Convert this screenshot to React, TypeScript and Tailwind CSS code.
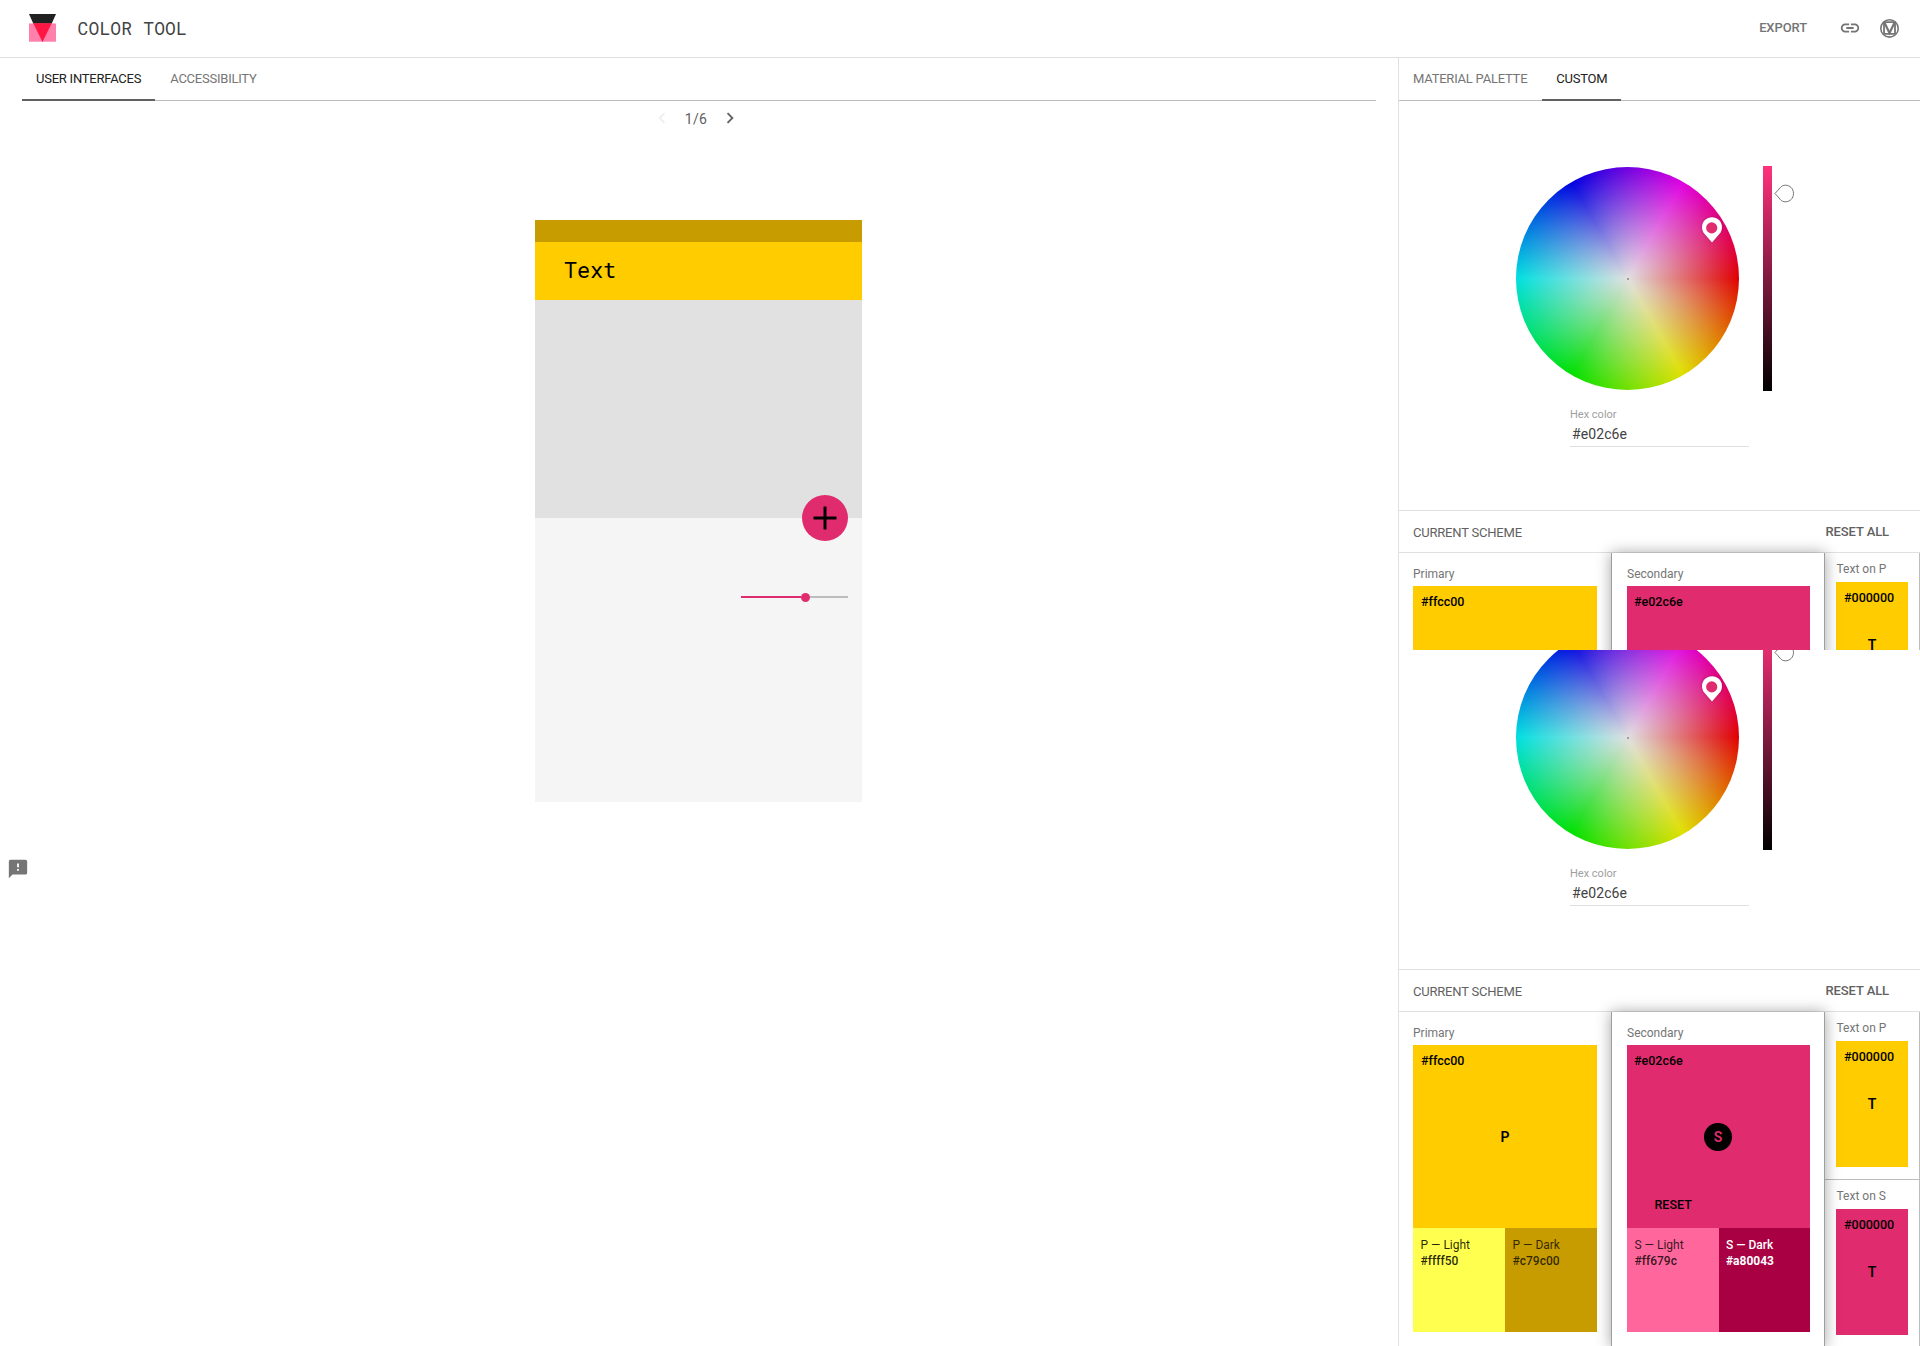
import React from "react";

function Logo() {
  return (
    <svg className="-mt-px" width="27" height="28" viewBox="0 0 27 28">
      <path d="M0 0H27L22.5 10H4.5Z" fill="#212121" />
      <path d="M0 9.5H27V27.7H0Z" fill="#ff80ab" />
      <path d="M4.3 9.3H22.7L13.5 28Z" fill="#ff1744" />
    </svg>
  );
}

function Header() {
  return (
    <header className="flex h-[58px] shrink-0 items-center border-b border-[#e0e0e0] pl-[29px] pr-[20px]">
      <Logo />
      <h1 className="ml-[21.500px] pb-[2px] font-['Roboto_Mono','Liberation_Mono',monospace] text-[18px] leading-6 tracking-[0.15px] text-[#424242]">
        COLOR TOOL
      </h1>
      <nav className="ml-auto flex items-center pb-[2px] text-[#757575]">
        <span className="text-[13px] font-medium leading-5 tracking-[-0.1px]">EXPORT</span>
        <svg className="ml-[32px]" width="22" height="22" viewBox="0 0 24 24" fill="currentColor">
          <path d="M3.9 12c0-1.71 1.39-3.1 3.1-3.1h4V7H7c-2.76 0-5 2.24-5 5s2.24 5 5 5h4v-1.9H7c-1.71 0-3.1-1.39-3.1-3.1zM8 13h8v-2H8v2zm9-6h-4v1.9h4c1.71 0 3.1 1.39 3.1 3.1s-1.39 3.1-3.1 3.1h-4V17h4c2.76 0 5-2.24 5-5s-2.24-5-5-5z" />
        </svg>
        <svg className="ml-[19px]" width="20" height="20" viewBox="0 0 20 20" fill="none" stroke="currentColor">
          <circle cx="9.5" cy="10.4" r="8.7" strokeWidth="1.6" />
          <path d="M4 4.2H15V15.8H4Z" strokeWidth="1.8" />
          <path d="M4.4 4.6L9.5 15L14.6 4.6" strokeWidth="2.2" />
        </svg>
      </nav>
    </header>
  );
}

function Tab({ label, active }: { label: string; active?: boolean }) {
  return (
    <div
      className={
        active
          ? "h-[43px] border-b-2 border-[#616161] px-[14px] pt-[11px] text-[#212121] not-first:ml-px"
          : "h-[43px] px-[14px] pt-[11px] text-[#757575] not-first:ml-px"
      }
    >
      <span className="block whitespace-nowrap text-[13px] leading-5 tracking-[-0.23px]">{label}</span>
    </div>
  );
}

function Phone() {
  return (
    <div className="ml-[535px] flex h-[582px] w-[327px] flex-col bg-[#f5f5f5]">
      <div className="h-[22px] bg-[#c79c00]" />
      <div className="flex h-[58px] items-center bg-[#ffcc00] pb-[2px] pl-[29px] font-['Roboto_Mono','Liberation_Mono',monospace] text-[22px] leading-7 tracking-[-0.2px] text-black">
        Text
      </div>
      <div className="h-[218px] bg-[#e1e1e1]" />
      <div className="-mt-[23px] mr-[14px] flex size-[46px] items-center justify-center self-end rounded-full bg-[#e02c6e]">
        <svg width="24" height="24" viewBox="0 0 24 24" stroke="#000" strokeWidth="3">
          <path d="M12 .5V23.5M.5 12H23.5" />
        </svg>
      </div>
      <div className="mr-[14px] mt-[51px] flex h-[10px] w-[107px] items-center self-end">
        <div className="h-[2px] w-[60px] bg-[#e02c6e]" />
        <div className="size-[9px] shrink-0 rounded-full bg-[#e02c6e]" />
        <div className="h-[2px] grow bg-[#bdbdbd]" />
      </div>
    </div>
  );
}

function Preview() {
  return (
    <main className="flex w-[1398px] shrink-0 flex-col">
      <div className="mx-[22px] flex h-[43px] border-b border-[#bdbdbd]">
        <Tab label="USER INTERFACES" active />
        <Tab label="ACCESSIBILITY" />
      </div>
      <div className="flex h-[35px] items-center justify-center pb-[2px] pr-[6px] text-[#616161]">
        <svg className="text-[#eeeeee]" width="22" height="22" viewBox="0 0 24 24" fill="currentColor">
          <path d="M15.41 7.41L14 6l-6 6 6 6 1.41-1.41L10.83 12z" />
        </svg>
        <span className="mx-[12px] pt-[2px] text-[14px] leading-5 tracking-[0.4px]">1/6</span>
        <svg width="22" height="22" viewBox="0 0 24 24" fill="currentColor">
          <path d="M10 6L8.59 7.41 13.17 12l-4.58 4.59L10 18l6-6z" />
        </svg>
      </div>
      <div className="pt-[84px]">
        <Phone />
      </div>
      <svg className="ml-[7px] mt-[56px]" width="22" height="22" viewBox="0 0 24 24" fill="#757575">
        <path d="M20 2H4c-1.1 0-1.99.9-1.99 2L2 22l4-4h14c1.1 0 2-.9 2-2V4c0-1.1-.9-2-2-2zm-7 12h-2v-2h2v2zm0-4h-2V6h2v4z" />
      </svg>
    </main>
  );
}

function Picker() {
  return (
    <section className="h-[409px] pt-[65px]">
      <div className="ml-[117px] flex">
        <div className="relative mt-px size-[223px] rounded-full bg-[radial-gradient(circle_closest-side,#e0e0e0,rgba(224,224,224,0)),conic-gradient(from_90deg,#e00000,#e0e000,#00e000,#00e0e0,#0000e0,#e000e0,#e00000)]">
          <div className="absolute left-[111px] top-[111px] size-[2px] bg-[#9e9e9e]" />
          <svg
            className="absolute left-[182px] top-[47px] overflow-visible drop-shadow-[0_0_1px_rgba(0,0,0,0.3)]"
            width="28"
            height="32"
            viewBox="0 0 28 32"
          >
            <path
              d="M14 28.5L6.4 19.8C4.9 18 4 15.8 4 13.2C4 7.5 8.4 3.3 14 3.3S24 7.5 24 13.2C24 15.8 23.1 18 21.6 19.8Z"
              fill="#fff"
            />
            <circle cx="13.7" cy="13.9" r="5.6" fill="#e02c6e" />
          </svg>
        </div>
        <div className="ml-[24px] h-[225px] w-[9px] bg-[linear-gradient(#ff327d,#000)]" />
        <svg className="ml-[2px] mt-[18px]" width="21" height="19" viewBox="0 0 21 19" fill="#fff" stroke="#757575">
          <path d="M.9 9.5C2.8 7.8 4.2 5.9 6 3.8C7.5 2 9.3 1.2 11.5 1.2C16 1.2 19.5 4.8 19.5 9.5S16 17.8 11.5 17.8C9.3 17.8 7.5 17 6 15.2C4.2 13.1 2.8 11.2 .9 9.5Z" />
        </svg>
      </div>
      <div className="ml-[171px] mt-[16px] flex h-[40px] w-[179px] flex-col border-b border-[#e0e0e0]">
        <label className="text-[11px] leading-4 text-[#9e9e9e]">Hex color</label>
        <span className="mt-px pl-[2px] text-[14px] leading-5 tracking-[0.1px] text-[#424242]">#e02c6e</span>
      </div>
    </section>
  );
}

function Shade({ name, hex, className }: { name: string; hex: string; className: string }) {
  return (
    <div className={`flex-1 pl-[7.500px] pt-[9px] text-[12px] leading-4 ${className}`}>
      <div>{name}</div>
      <div className="font-medium in-[.font-medium]:font-bold">{hex}</div>
    </div>
  );
}

function TextSwatch({ label, className }: { label: string; className: string }) {
  return (
    <div className="h-[168px] border-b border-[#bdbdbd] pl-[11px]">
      <div className="h-[29px] pl-[0.500px] pt-[8px] text-[12px] leading-4 text-[#757575]">{label}</div>
      <div className={`h-[126px] w-[72px] text-black ${className}`}>
        <div className="pl-[8px] pt-[8px] text-[12.500px] font-medium leading-4">#000000</div>
        <div className="pt-[29px] text-center text-[14px] font-semibold leading-5">T</div>
      </div>
    </div>
  );
}

function Scheme({ peek }: { peek?: boolean }) {
  return (
    <section>
      <div className="flex h-[43px] items-center justify-between border-b border-t border-[#e0e0e0] pl-[14px] pr-[31px]">
        <span className="pt-[3px] text-[13px] leading-5 tracking-[-0.2px] text-[#616161]">CURRENT SCHEME</span>
        <span className="text-[13px] font-medium leading-5 tracking-[-0.1px] text-[#616161]">RESET ALL</span>
      </div>
      <div className="flex h-[336px]">
        <div className="w-[212px] pl-[14px]">
          <div className="h-[33px] pt-[13px] text-[12px] leading-4 text-[#757575]">Primary</div>
          <div className="w-[184px]">
            <div className="h-[183px] bg-[#ffcc00] pl-[8px] pt-[8px] text-[12.500px] font-medium leading-4 text-black">
              #ffcc00
              {!peek && <div className="-ml-[8px] mt-[58px] text-center text-[14px] font-semibold leading-5">P</div>}
            </div>
            {!peek && (
              <div className="flex h-[104px]">
                <Shade name="P — Light" hex="#ffff50" className="bg-[#ffff50] text-black/85" />
                <Shade name="P — Dark" hex="#c79c00" className="bg-[#c79c00] text-black/75" />
              </div>
            )}
          </div>
        </div>
        <div className="z-10 w-[214px] border-x border-[#9e9e9e] bg-white pl-[15px] shadow-[0_0_14px_rgba(0,0,0,0.36)]">
          <div className="h-[33px] pt-[13px] text-[12px] leading-4 text-[#757575]">Secondary</div>
          <div className="w-[183px]">
            <div className="flex h-[183px] flex-col bg-[#e02c6e] text-black">
              <div className="pl-[7px] pt-[8px] text-[12.500px] font-medium leading-4">#e02c6e</div>
              {!peek && (
                <>
                  <div className="mr-px mt-[54px] flex size-[28px] items-center justify-center self-center rounded-full bg-black text-[14px] font-semibold text-[#e02c6e]">
                    S
                  </div>
                  <div className="ml-[27.500px] mt-[44px] text-[12.500px] font-medium leading-5">RESET</div>
                </>
              )}
            </div>
            {!peek && (
              <div className="flex h-[104px]">
                <Shade name="S — Light" hex="#ff679c" className="bg-[#ff679c] text-black/80" />
                <Shade name="S — Dark" hex="#a80043" className="bg-[#a80043] font-medium text-white" />
              </div>
            )}
          </div>
        </div>
        <div className="w-[95px] border-r border-[#bdbdbd]">
          <TextSwatch label="Text on P" className="bg-[#ffcc00]" />
          {!peek && <TextSwatch label="Text on S" className="bg-[#e02c6e]" />}
        </div>
      </div>
    </section>
  );
}

function Sidebar() {
  return (
    <aside className="flex w-[522px] flex-col border-l border-[#e0e0e0]">
      <div className="flex h-[43px] shrink-0 border-b border-[#bdbdbd]">
        <Tab label="MATERIAL PALETTE" />
        <Tab label="CUSTOM" active />
      </div>
      <div className="h-[549px] shrink-0 overflow-hidden">
        <Picker />
        <Scheme peek />
      </div>
      <div className="h-[696px] shrink-0 overflow-hidden">
        <div className="-mt-[90px]">
          <Picker />
          <Scheme />
        </div>
      </div>
    </aside>
  );
}

export default function App() {
  return (
    <div className="flex h-[1346px] w-[1920px] flex-col overflow-hidden bg-white font-[Roboto,sans-serif]">
      <Header />
      <div className="flex grow">
        <Preview />
        <Sidebar />
      </div>
    </div>
  );
}
